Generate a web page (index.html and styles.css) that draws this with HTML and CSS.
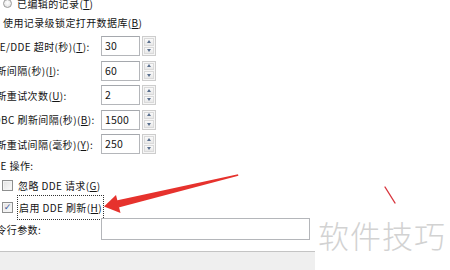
FILE: index.html
```html
<!DOCTYPE html>
<html lang="zh-CN">
<head>
  <meta charset="UTF-8">
  <title>Access 选项 - 高级</title>
  <link rel="stylesheet" href="styles.css">
</head>
<body>

<div class="stage">
  <div class="dialog">
    <div class="opt opt-radio"><span class="radio"></span><span>已编辑的记录(<u>T</u>)</span></div>
    <div class="opt opt-lock"><span class="check"></span><span>使用记录级锁定打开数据库(<u>B</u>)</span></div>

    <div class="fields">
      <div class="field">
        <span class="label">OLE/DDE 超时(秒)(<u>T</u>):</span>
        <span class="num">30</span>
        <span class="spin"><span class="up"></span><span class="down"></span></span>
      </div>
      <div class="field">
        <span class="label">刷新间隔(秒)(<u>I</u>):</span>
        <span class="num">60</span>
        <span class="spin"><span class="up"></span><span class="down"></span></span>
      </div>
      <div class="field">
        <span class="label">更新重试次数(<u>U</u>):</span>
        <span class="num">2</span>
        <span class="spin"><span class="up"></span><span class="down"></span></span>
      </div>
      <div class="field">
        <span class="label">ODBC 刷新间隔(秒)(<u>B</u>):</span>
        <span class="num">1500</span>
        <span class="spin"><span class="up"></span><span class="down"></span></span>
      </div>
      <div class="field">
        <span class="label">更新重试间隔(毫秒)(<u>Y</u>):</span>
        <span class="num">250</span>
        <span class="spin"><span class="up"></span><span class="down"></span></span>
      </div>
    </div>

    <div class="group-title">DDE 操作:</div>
    <div class="opt opt-dde"><span class="check"></span><span>忽略 DDE 请求(<u>G</u>)</span></div>
    <div class="opt opt-dde"><span class="check checked">&#10003;</span><span class="focus">启用 DDE 刷新(<u>H</u>)</span></div>

    <div class="field field-cmd">
      <span class="label">命令行参数:</span>
      <span class="cmd"></span>
    </div>

    <div class="footer"></div>
  </div>

  <div class="watermark">软件技巧</div>

  <svg class="marks" width="450" height="270" viewBox="0 0 450 270">
    <polygon points="238,174.2 238.4,175.8 118.6,207.6 116.4,200.4" fill="#e6322d"/>
    <polygon points="104,206.5 116,195 120.5,213" fill="#e6322d"/>
    <line x1="385" y1="187" x2="395" y2="203" stroke="#d8343c" stroke-width="1.4" stroke-linecap="round"/>
  </svg>
</div>

</body>
</html>
```

FILE: styles.css
```css
body {
  margin: 0;
  background: #ffffff;
  font-family: "Noto Sans CJK SC", "Microsoft YaHei", sans-serif;
  font-size: 10px;
  color: #141414;
}
u {
  text-decoration: underline;
  text-underline-offset: 1px;
}
.stage {
  position: relative;
  width: 450px;
  height: 270px;
  overflow: hidden;
}
.dialog {
  width: 329px;
  margin-left: -14px;
  margin-top: -6px;
  display: flex;
  flex-direction: column;
  letter-spacing: 0.4px;
}
.opt {
  display: flex;
  align-items: center;
  height: 19px;
  white-space: nowrap;
}
.opt-radio {
  padding-left: 17px;
  gap: 5px;
}
.opt-lock {
  padding-left: 3px;
  gap: 3px;
}
.opt-dde {
  padding-left: 16px;
  gap: 5px;
  height: 22px;
}
.radio {
  width: 9px;
  height: 9px;
  border-radius: 50%;
  border: 1px solid #9a9a9a;
  background: radial-gradient(circle at 50% 40%, #ffffff, #dcdcdc);
  box-sizing: border-box;
}
.check {
  width: 11px;
  height: 11px;
  border: 1px solid #8e8f8f;
  box-sizing: border-box;
  background: linear-gradient(135deg, #e2e2e2, #fbfbfb);
  box-shadow: inset 0 0 0 1px #f4f4f4;
  font-size: 9px;
  line-height: 9px;
  text-align: center;
  letter-spacing: 0;
  color: #3a5a9a;
  font-family: "DejaVu Sans", sans-serif;
}
.focus {
  outline: 1px dotted #333;
  padding: 4px 1px;
}
.fields {
  display: flex;
  flex-direction: column;
  gap: 4.5px;
  margin-top: 4px;
}
.field {
  display: flex;
  align-items: center;
  height: 20px;
}
.label {
  width: 115px;
  white-space: nowrap;
}
.num {
  width: 39px;
  height: 20px;
  box-sizing: border-box;
  border: 1px solid #b4b6ba;
  border-top-color: #a5a8ad;
  padding-left: 3px;
  font-size: 10.5px;
  line-height: 18px;
  letter-spacing: 0.2px;
  background: #ffffff;
}
.spin {
  width: 14px;
  height: 20px;
  margin-left: 2px;
  box-sizing: border-box;
  border: 1px solid #cdcdcd;
  display: flex;
  flex-direction: column;
  gap: 1px;
  padding: 1px;
  background: #f6f6f6;
}
.up, .down {
  flex: 1;
  background: linear-gradient(#fafafa, #e8e8e8);
  border: 1px solid #dadada;
  position: relative;
}
.up::after, .down::after {
  content: "";
  position: absolute;
  left: 50%;
  top: 50%;
  margin-left: -2.5px;
  border-left: 2.5px solid transparent;
  border-right: 2.5px solid transparent;
}
.up::after {
  margin-top: -2px;
  border-bottom: 3px solid #5a6f8e;
}
.down::after {
  margin-top: -1px;
  border-top: 3px solid #5a6f8e;
}
.group-title {
  height: 16px;
  line-height: 16px;
  margin-top: 4px;
}
.field-cmd {
  height: 22px;
}
.cmd {
  width: 209px;
  height: 22px;
  box-sizing: border-box;
  border: 1px solid #b4b6ba;
  background: #ffffff;
}
.footer {
  margin-top: 11px;
  height: 30px;
  border-top: 1px solid #c4c4c4;
  background: #efefef;
}
.watermark {
  position: absolute;
  left: 318px;
  top: 212px;
  font-size: 31px;
  font-weight: 300;
  color: #d2d2d2;
  letter-spacing: 1px;
  white-space: nowrap;
}
.marks {
  position: absolute;
  left: 0;
  top: 0;
}
```
